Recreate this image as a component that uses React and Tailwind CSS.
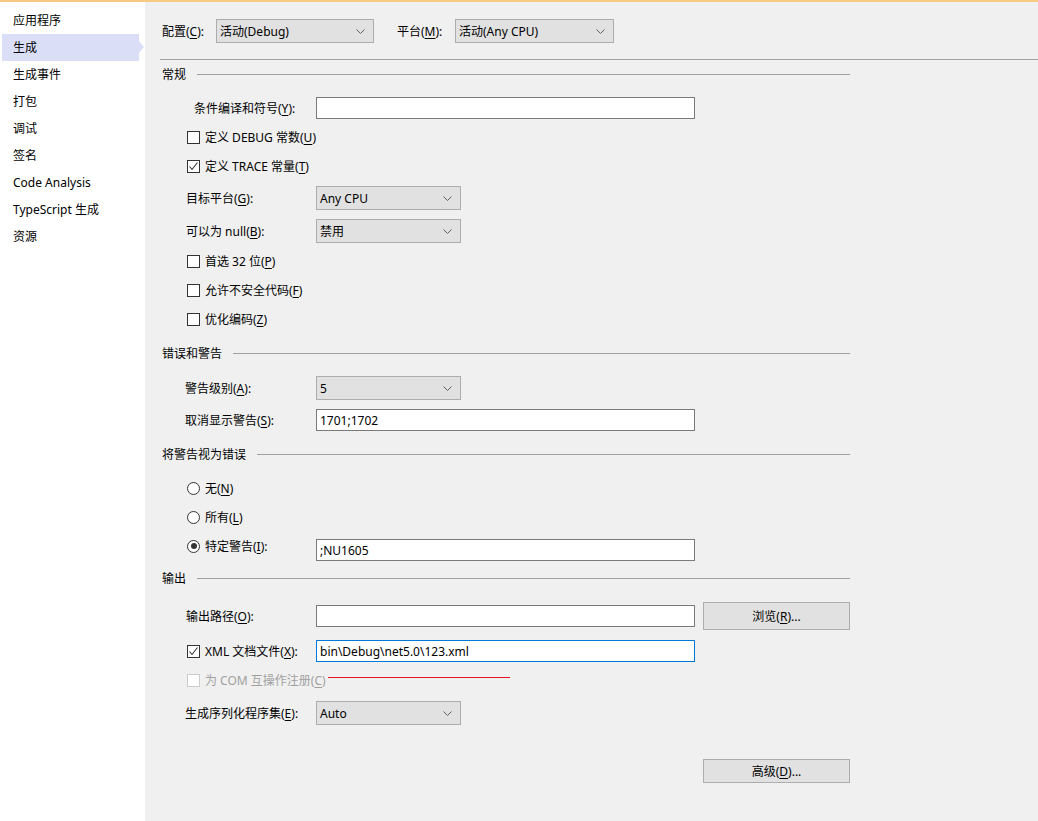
import React from 'react';

const navItems = ['应用程序', '生成', '生成事件', '打包', '调试', '签名', 'Code Analysis', 'TypeScript 生成', '资源'];

function U({ children }) {
  return <span className="underline underline-offset-2">{children}</span>;
}

function Chevron() {
  return (
    <svg width="9" height="5" viewBox="0 0 9 5" fill="none">
      <path d="M0.5 0.5 L4.5 4.5 L8.5 0.5" stroke="#606060" strokeWidth="1" />
    </svg>
  );
}

function Select({ value, className }) {
  return (
    <div className={`flex h-[24px] items-center justify-between border border-[#adadad] bg-[#e1e1e1] pl-[3px] pr-[8px] ${className}`}>
      <span className="pt-px">{value}</span>
      <Chevron />
    </div>
  );
}

function TextBox({ value, focused }) {
  return (
    <div
      className={`flex h-[22px] w-[379px] items-center border bg-white px-[3px] pt-px ${
        focused ? 'border-[#0078d7]' : 'border-[#7a7a7a]'
      }`}
    >
      {value}
    </div>
  );
}

function CheckBox({ checked, disabled }) {
  return (
    <div
      className={`flex h-[13px] w-[13px] shrink-0 items-center justify-center border bg-white ${
        disabled ? 'border-[#cccccc]' : 'border-[#333333]'
      }`}
    >
      {checked && (
        <svg width="11" height="11" viewBox="0 0 11 11" fill="none">
          <path d="M1.5 5.5 L4 8.5 L9.5 1.5" stroke="#333333" strokeWidth="1.1" />
        </svg>
      )}
    </div>
  );
}

function Radio({ checked }) {
  return (
    <div className="flex h-[13px] w-[13px] shrink-0 items-center justify-center rounded-full border border-[#333333] bg-white">
      {checked && <div className="h-[6px] w-[6px] rounded-full bg-[#333333]" />}
    </div>
  );
}

function Section({ title, className }) {
  return (
    <div className={`flex h-[24px] w-[688px] items-center ${className}`}>
      <span className="pt-px">{title}</span>
      <div className="ml-[11px] h-px flex-1 bg-[#a0a0a0]" />
    </div>
  );
}

function CheckRow({ label, checked, className }) {
  return (
    <div className={`flex h-[24px] items-center pl-[25px] ${className}`}>
      <CheckBox checked={checked} />
      <span className="ml-[5px] pt-px">{label}</span>
    </div>
  );
}

function Button({ children, className }) {
  return (
    <div className={`flex w-[147px] items-center justify-center border border-[#adadad] bg-[#e1e1e1] pt-px ${className}`}>
      {children}
    </div>
  );
}

export default function App() {
  return (
    <div className="flex h-[821px] w-[1038px] flex-col overflow-hidden border-t-2 border-[#f8c982] font-['Noto_Sans','Noto_Sans_CJK_SC',sans-serif] text-[12px] leading-[16px] text-black">
      <div className="flex flex-1">
        {/* sidebar */}
        <aside className="w-[145px] bg-white pt-[5px]">
          {navItems.map((item, i) => (
            <div
              key={item}
              className={`relative ml-[2px] flex h-[27px] w-[137px] items-center pl-[11px] pt-px ${
                i === 1 ? 'bg-[#dadff7]' : ''
              }`}
            >
              {item}
              {i === 1 && (
                <div className="absolute right-[-5px] top-[7px] h-0 w-0 border-y-[6px] border-l-[5px] border-y-transparent border-l-[#dadff7]" />
              )}
            </div>
          ))}
        </aside>

        {/* main */}
        <main className="flex flex-1 flex-col bg-[#f0f0f0]">
          <div className="mt-[17px] flex h-[24px] items-center pl-[17px]">
            <span className="w-[54px] pt-px">
              配置(<U>C</U>):
            </span>
            <Select value="活动(Debug)" className="w-[158px]" />
            <span className="ml-[23px] w-[58px] pt-px">
              平台(<U>M</U>):
            </span>
            <Select value="活动(Any CPU)" className="w-[159px]" />
          </div>
          <div className="ml-[15px] mt-[16px] h-px bg-[#a0a0a0]" />

          <div className="flex flex-col pl-[17px]">
            <Section title="常规" className="mt-[2px]" />

            <div className="mt-[10px] flex h-[24px] items-center pl-[32px]">
              <span className="w-[122px] pt-px">
                条件编译和符号(<U>Y</U>):
              </span>
              <TextBox value="" />
            </div>

            <CheckRow className="mt-[5px]" label={<>定义 DEBUG 常数(<U>U</U>)</>} />
            <CheckRow className="mt-[5px]" checked label={<>定义 TRACE 常量(<U>T</U>)</>} />

            <div className="mt-[8px] flex h-[24px] items-center pl-[24px]">
              <span className="w-[130px] pt-px">
                目标平台(<U>G</U>):
              </span>
              <Select value="Any CPU" className="w-[145px]" />
            </div>
            <div className="mt-[9px] flex h-[24px] items-center pl-[24px]">
              <span className="w-[130px] pt-px">
                可以为 null(<U>B</U>):
              </span>
              <Select value="禁用" className="w-[145px]" />
            </div>

            <CheckRow className="mt-[6px]" label={<>首选 32 位(<U>P</U>)</>} />
            <CheckRow className="mt-[5px]" label={<>允许不安全代码(<U>F</U>)</>} />
            <CheckRow className="mt-[5px]" label={<>优化编码(<U>Z</U>)</>} />

            <Section title="错误和警告" className="mt-[10px]" />

            <div className="mt-[11px] flex h-[24px] items-center pl-[23px]">
              <span className="w-[131px] pt-px">
                警告级别(<U>A</U>):
              </span>
              <Select value="5" className="w-[145px]" />
            </div>
            <div className="mt-[8px] flex h-[24px] items-center pl-[23px]">
              <span className="w-[131px] pt-px">
                取消显示警告(<U>S</U>):
              </span>
              <TextBox value="1701;1702" />
            </div>

            <Section title="将警告视为错误" className="mt-[10px]" />

            <div className="mt-[10px] flex h-[24px] items-center pl-[25px]">
              <Radio />
              <span className="ml-[5px] pt-px">
                无(<U>N</U>)
              </span>
            </div>
            <div className="mt-[5px] flex h-[24px] items-center pl-[25px]">
              <Radio />
              <span className="ml-[5px] pt-px">
                所有(<U>L</U>)
              </span>
            </div>
            <div className="mt-[9px] flex h-[24px] items-center pl-[25px]">
              <div className="flex h-[16px] w-[129px] items-center self-start">
                <Radio checked />
                <span className="ml-[5px] pt-px">
                  特定警告(<U>I</U>):
                </span>
              </div>
              <TextBox value=";NU1605" />
            </div>

            <Section title="输出" className="mt-[4px]" />

            <div className="mt-[14px] flex h-[24px] items-center pl-[24px]">
              <span className="w-[130px] pt-px">
                输出路径(<U>O</U>):
              </span>
              <TextBox value="" />
              <Button className="ml-[8px] h-[28px] shrink-0">
                浏览(<U>R</U>)...
              </Button>
            </div>

            <div className="mt-[11px] flex h-[24px] items-center pl-[25px]">
              <div className="flex w-[129px] items-center">
                <CheckBox checked />
                <span className="ml-[5px] pt-px">
                  XML 文档文件(<U>X</U>):
                </span>
              </div>
              <TextBox value="bin\Debug\net5.0\123.xml" focused />
            </div>

            <div className="mt-[5px] flex h-[24px] items-center pl-[25px] text-[#a0a0a0]">
              <CheckBox disabled />
              <span className="ml-[5px] pt-px">
                为 COM 互操作注册(<U>C</U>)
              </span>
              <div className="ml-[2px] mt-[9px] h-px w-[182px] self-start bg-[#e81123]" />
            </div>

            <div className="mt-[9px] flex h-[24px] items-center pl-[23px]">
              <span className="w-[131px] pt-px">
                生成序列化程序集(<U>E</U>):
              </span>
              <Select value="Auto" className="w-[145px]" />
            </div>

            <div className="mt-[34px] flex pl-[541px]">
              <Button className="h-[24px]">
                高级(<U>D</U>)...
              </Button>
            </div>
          </div>
        </main>
      </div>
    </div>
  );
}
